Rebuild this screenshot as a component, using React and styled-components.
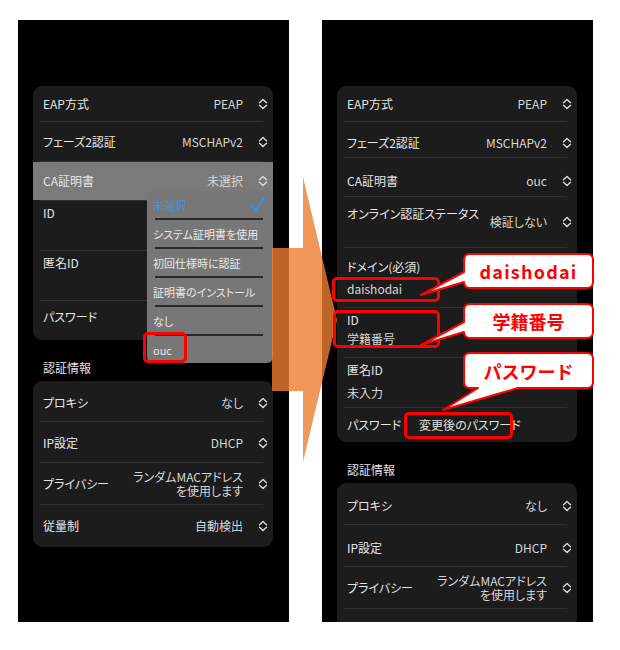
import React from 'react';
import styled, { createGlobalStyle } from 'styled-components';

const GlobalStyle = createGlobalStyle`
  html, body {
    margin: 0;
    background: #ffffff;
  }
  body {
    font-family: "Noto Sans CJK JP", "Noto Sans", sans-serif;
  }
`;

const Page = styled.div`
  position: relative;
  width: 620px;
  height: 650px;
  box-sizing: border-box;
  padding: 20px 0 0 18px;
  display: flex;
  gap: 33px;
  overflow: hidden;
`;

const Phone = styled.div`
  position: relative;
  width: 271px;
  height: 602px;
  box-sizing: border-box;
  padding: 66px 16px 0 15px;
  background: #000;
  overflow: hidden;
  font-feature-settings: "palt";
`;

const Card = styled.div`
  background: #1c1c1c;
  border-radius: 9px;
  overflow: hidden;
`;

const SectionLabel = styled.div`
  padding: 20px 0 5px 10px;
  font-size: 12px;
  line-height: 16px;
  color: #e2e2e2;
`;

const Row = styled.div`
  display: flex;
  flex-direction: ${(p) => (p.$stack ? 'column' : 'row')};
  align-items: ${(p) => (p.$stack ? 'flex-start' : 'center')};
  box-sizing: border-box;
  height: ${(p) => p.$h}px;
  padding: ${(p) => p.$pt || 0}px 5px 0 10px;
  background: ${(p) => (p.$active ? '#7a7a7a' : 'transparent')};
  font-size: 12px;
  line-height: 16px;
`;

const Divider = styled.div`
  height: 1px;
  margin: 0 10px 0 7px;
  background: #303030;
`;

const Label = styled.div`
  margin-right: ${(p) => (p.$fixed ? '0' : 'auto')};
  align-self: ${(p) => (p.$top ? 'flex-start' : 'auto')};
  margin-top: ${(p) => p.$top || 0}px;
  color: #e6e6e6;
  white-space: nowrap;
`;

const Value = styled.div`
  color: #d6d6d6;
  text-align: right;
  white-space: nowrap;
`;

const ValueLine = styled.div`
  height: 14px;
  line-height: 14px;
`;

const Sub = styled.div`
  margin-top: ${(p) => p.$gap}px;
  color: #d8d8d8;
`;

const Inline = styled.div`
  margin-left: 18px;
  color: #e0e0e0;
`;

const ChevronSvg = styled.svg`
  width: 10px;
  height: 12px;
  margin-left: 15px;
  flex-shrink: 0;
  fill: none;
  stroke: #dcdcdc;
  stroke-width: 1.4;
  stroke-linecap: round;
  stroke-linejoin: round;
`;

const Chevron = () => (
  <ChevronSvg viewBox="0 0 10 12">
    <path d="M1.5 4.8 5 1.6 8.5 4.8M1.5 7.2 5 10.4 8.5 7.2" />
  </ChevronSvg>
);

const Menu = styled.div`
  position: absolute;
  left: 129px;
  top: 171px;
  width: 126px;
  box-sizing: border-box;
  padding: 0 8px 0 6px;
  background: #777;
  border-radius: 6px;
  font-size: 11px;
  line-height: 14px;
`;

const MenuItem = styled.div`
  height: 27px;
  display: flex;
  align-items: center;
  justify-content: space-between;
  color: ${(p) => (p.$selected ? '#4a90dc' : '#e8e8e8')};
  white-space: nowrap;
`;

const MenuLine = styled.div`
  height: 2px;
  margin: 0 2px;
  background: #2a2a2a;
`;

const Check = styled.svg`
  width: 14px;
  height: 15px;
  fill: none;
  stroke: #3f8ee0;
  stroke-width: 2.2;
  stroke-linecap: round;
`;

const Arrow = styled.svg`
  position: absolute;
  left: 270px;
  top: 175px;
  width: 70px;
  height: 290px;
`;

const Mark = styled.div`
  position: absolute;
  left: ${(p) => p.$x}px;
  top: ${(p) => p.$y}px;
  width: ${(p) => p.$w}px;
  height: ${(p) => p.$hh}px;
  box-sizing: border-box;
  border: 3px solid #f00;
  border-radius: 5px;
`;

const Bubble = styled.div`
  position: absolute;
  left: ${(p) => p.$x}px;
  top: ${(p) => p.$y}px;
  width: 129px;
  height: ${(p) => p.$hh}px;
  display: flex;
  align-items: center;
  justify-content: center;
`;

const BubbleShape = styled.svg`
  position: absolute;
  left: 0;
  top: 0;
  width: 129px;
  height: ${(p) => p.$hh}px;
  overflow: visible;
  fill: #fff;
  stroke: #f00;
  stroke-width: 2;
  stroke-linejoin: round;
`;

const BubbleText = styled.span`
  position: relative;
  font-family: "Noto Sans CJK JP", "Noto Sans", sans-serif;
  font-weight: 700;
  font-size: 18px;
  line-height: 20px;
  letter-spacing: ${(p) => p.$ls || 0}px;
  color: #f00;
`;

const sideTail = 'M6 0H123Q129 0 129 6V28Q129 34 123 34H6Q0 34 0 28L-43 41L0 18V6Q0 0 6 0Z';
const bottomTail = 'M6 0H123Q129 0 129 6V29Q129 35 123 35H54L-21 57L14 35H6Q0 35 0 29V6Q0 0 6 0Z';

function Callout({ x, y, h, path, ls, children }) {
  return (
    <Bubble $x={x} $y={y} $hh={h}>
      <BubbleShape $hh={h}>
        <path d={path} />
      </BubbleShape>
      <BubbleText $ls={ls}>{children}</BubbleText>
    </Bubble>
  );
}

function PrivacyRow() {
  return (
    <Row $h={41}>
      <Label>プライバシー</Label>
      <Value>
        <ValueLine>ランダムMACアドレス</ValueLine>
        <ValueLine>を使用します</ValueLine>
      </Value>
      <Chevron />
    </Row>
  );
}

export default function App() {
  return (
    <>
      <GlobalStyle />
      <Page>
        <Phone>
          <Card>
            <Row $h={35}><Label>EAP方式</Label><Value>PEAP</Value><Chevron /></Row>
            <Divider />
            <Row $h={39}><Label>フェーズ2認証</Label><Value>MSCHAPv2</Value><Chevron /></Row>
            <Divider />
            <Row $h={38} $active><Label>CA証明書</Label><Value>未選択</Value><Chevron /></Row>
            <Divider />
            <Row $h={49} $stack $pt={4}><Label>ID</Label></Row>
            <Divider />
            <Row $h={49} $stack $pt={4}><Label>匿名ID</Label></Row>
            <Divider />
            <Row $h={39} $stack $pt={8}><Label>パスワード</Label></Row>
          </Card>
          <SectionLabel>認証情報</SectionLabel>
          <Card>
            <Row $h={40} $pt={4}><Label>プロキシ</Label><Value>なし</Value><Chevron /></Row>
            <Divider />
            <Row $h={40} $pt={2}><Label>IP設定</Label><Value>DHCP</Value><Chevron /></Row>
            <Divider />
            <PrivacyRow />
            <Divider />
            <Row $h={42}><Label>従量制</Label><Value>自動検出</Value><Chevron /></Row>
          </Card>
          <Menu>
            <MenuItem $selected>
              未選択
              <Check viewBox="0 0 14 15"><path d="M1.5 9.5 5 13.5 12.8 1.2" /></Check>
            </MenuItem>
            <MenuLine />
            <MenuItem>システム証明書を使用</MenuItem>
            <MenuLine />
            <MenuItem>初回仕様時に認証</MenuItem>
            <MenuLine />
            <MenuItem>証明書のインストール</MenuItem>
            <MenuLine />
            <MenuItem>なし</MenuItem>
            <MenuLine />
            <MenuItem>ouc</MenuItem>
          </Menu>
        </Phone>

        <Phone>
          <Card>
            <Row $h={35}><Label>EAP方式</Label><Value>PEAP</Value><Chevron /></Row>
            <Divider />
            <Row $h={35} $pt={6}><Label>フェーズ2認証</Label><Value>MSCHAPv2</Value><Chevron /></Row>
            <Divider />
            <Row $h={38} $pt={8}><Label>CA証明書</Label><Value>ouc</Value><Chevron /></Row>
            <Divider />
            <Row $h={50}>
              <Label $top={9}>オンライン認証ステータス</Label>
              <Value>検証しない</Value>
              <Chevron />
            </Row>
            <Divider />
            <Row $h={59} $stack $pt={11}><Label>ドメイン(必須)</Label><Sub $gap={6}>daishodai</Sub></Row>
            <Divider />
            <Row $h={49} $stack $pt={4}><Label>ID</Label><Sub $gap={3}>学籍番号</Sub></Row>
            <Divider />
            <Row $h={49} $stack $pt={4}><Label>匿名ID</Label><Sub $gap={7}>未入力</Sub></Row>
            <Divider />
            <Row $h={34}><Label $fixed>パスワード</Label><Inline>変更後のパスワード</Inline></Row>
          </Card>
          <SectionLabel>認証情報</SectionLabel>
          <Card>
            <Row $h={41} $pt={4}><Label>プロキシ</Label><Value>なし</Value><Chevron /></Row>
            <Divider />
            <Row $h={41} $pt={5}><Label>IP設定</Label><Value>DHCP</Value><Chevron /></Row>
            <Divider />
            <PrivacyRow />
            <Divider />
            <Row $h={30} />
          </Card>
        </Phone>

        <Arrow viewBox="0 0 70 290">
          <polygon
            points="2,73 33,73 33,2 67,145 33,287 33,216 2,216"
            fill="rgba(237,125,49,0.8)"
          />
        </Arrow>

        <Mark $x={143} $y={332} $w={44} $hh={31} />
        <Mark $x={332} $y={277} $w={108} $hh={25} />
        <Mark $x={333} $y={310} $w={107} $hh={38} />
        <Mark $x={404} $y={412} $w={109} $hh={27} />

        <Callout x={464} y={254} h={34} path={sideTail} ls={1.2}>daishodai</Callout>
        <Callout x={464} y={304} h={34} path={sideTail}>学籍番号</Callout>
        <Callout x={464} y={353} h={35} path={bottomTail}>パスワード</Callout>
      </Page>
    </>
  );
}
